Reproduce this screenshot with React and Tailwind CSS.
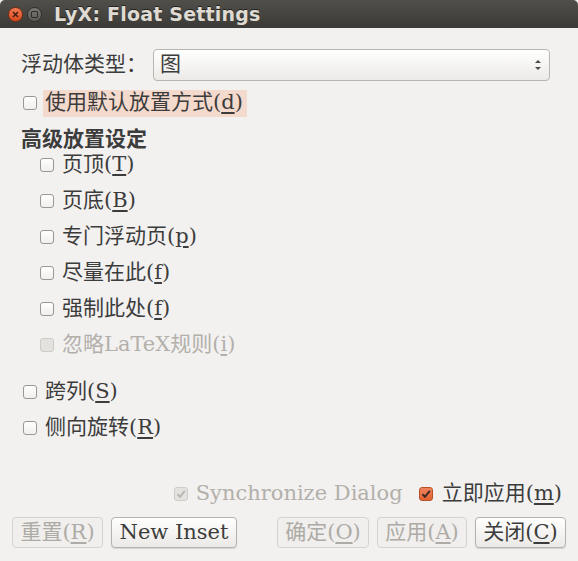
import React from "react";

const font = { fontFamily: '"DejaVu Serif", "Noto Sans CJK SC", serif' };

const Box = ({ checked, disabled, accent }) => (
  <span
    className={
      "w-[14px] h-[14px] rounded-[3px] border flex items-center justify-center shrink-0 " +
      (accent
        ? "border-[#b8502a] bg-gradient-to-b from-[#f0845c] to-[#e2612f]"
        : disabled
        ? "border-[#cfccc8] bg-[#e4e2df]"
        : "border-[#9b9893] bg-gradient-to-b from-white to-[#f0efed]")
    }
  >
    {checked && (
      <svg width="10" height="10" viewBox="0 0 10 10">
        <path
          d="M1.5 5.2 L4 7.8 L8.8 1.8"
          fill="none"
          stroke={accent ? "#3a2a24" : "#b9b6b2"}
          strokeWidth="2"
        />
      </svg>
    )}
  </span>
);

const Check = ({ label, mn, disabled, highlight, indent }) => (
  <div className={"h-[22px] flex items-center " + (indent ? "pl-[40px]" : "pl-[23px]")}>
    <Box disabled={disabled} />
    <span
      className={
        "ml-[6px] h-[27px] flex items-center px-[2px] text-[21px] " +
        (highlight ? "bg-[#f4d9cd] pr-[4px] " : "") +
        (disabled ? "text-[#b3b0ab]" : "text-[#3c3c3c]")
      }
    >
      {label}(<span className="underline underline-offset-[3px]">{mn}</span>)
    </span>
  </div>
);

const Btn = ({ children, disabled, w }) => (
  <button
    className={
      "h-[31px] rounded-[4px] border flex items-center justify-center text-[21px] " +
      w +
      (disabled
        ? " border-[#d6d3cf] bg-[#f0efed] text-[#aeaba6]"
        : " border-[#b5b2ad] bg-gradient-to-b from-white to-[#ebe9e6] text-[#3c3c3c] shadow-[0_1px_1px_rgba(0,0,0,0.12)]")
    }
  >
    {children}
  </button>
);

const Mn = ({ c }) => <span className="underline underline-offset-[3px]">{c}</span>;

export default function App() {
  return (
    <div className="w-[578px] h-[561px] bg-[#f2f1f0] flex flex-col overflow-hidden" style={font}>
      <div className="h-[28px] bg-gradient-to-b from-[#504f4a] to-[#3b3a36] flex items-center pl-[8px] rounded-t-[5px]">
        <span className="w-[15px] h-[15px] rounded-full bg-gradient-to-b from-[#f37a50] to-[#d8481c] border border-[#7a2a12] flex items-center justify-center">
          <svg width="7" height="7" viewBox="0 0 7 7">
            <path d="M1 1 L6 6 M6 1 L1 6" stroke="#3a1a10" strokeWidth="1.4" />
          </svg>
        </span>
        <span className="ml-[4px] w-[15px] h-[15px] rounded-full bg-gradient-to-b from-[#7a7975] to-[#5c5b57] border border-[#302f2c] flex items-center justify-center">
          <span className="w-[7px] h-[7px] border-[1.5px] border-[#2e2d2a] rounded-[1px]" />
        </span>
        <span
          className="ml-[12px] text-[19px] font-bold text-[#dfdbd2] tracking-[0.2px]"
          style={{ fontFamily: '"DejaVu Sans", sans-serif', textShadow: "0 -1px 0 #222" }}
        >
          LyX: Float Settings
        </span>
      </div>

      <div className="mt-[21px] flex items-center pl-[21px] pr-[28px]">
        <span className="text-[21px] text-[#3c3c3c] w-[132px]">浮动体类型：</span>
        <div className="flex-1 h-[32px] rounded-[4px] border border-[#b9b6b1] bg-gradient-to-b from-white to-[#eceae7] flex items-center pl-[6px] pr-[7px]">
          <span className="flex-1 text-[21px] text-[#3c3c3c]">图</span>
          <svg width="8" height="14" viewBox="0 0 8 14">
            <path d="M1 5 L4 2 L7 5 Z" fill="#4a4a4a" />
            <path d="M1 9 L4 12 L7 9 Z" fill="#4a4a4a" />
          </svg>
        </div>
      </div>

      <div className="mt-[11px]">
        <Check label="使用默认放置方式" mn="d" highlight />
      </div>

      <div className="mt-[7px] h-[32px] pt-[4px] flex items-center pl-[21px] text-[21px] font-bold text-[#3c3c3c]">
        高级放置设定
      </div>

      <div className="mt-[1px] flex flex-col gap-[14px]">
        <Check indent label="页顶" mn="T" />
        <Check indent label="页底" mn="B" />
        <Check indent label="专门浮动页" mn="p" />
        <Check indent label="尽量在此" mn="f" />
        <Check indent label="强制此处" mn="f" />
        <Check indent disabled label="忽略LaTeX规则" mn="i" />
      </div>

      <div className="mt-[25px] flex flex-col gap-[14px]">
        <Check label="跨列" mn="S" />
        <Check label="侧向旋转" mn="R" />
      </div>

      <div className="mt-auto h-[22px] flex items-center justify-end pr-[16px]">
        <Box checked disabled />
        <span className="ml-[8px] text-[21px] text-[#b3b0ab]">Synchronize Dialog</span>
        <span className="ml-[16px]">
          <Box checked accent />
        </span>
        <span className="ml-[9px] text-[21px] text-[#3c3c3c]">
          立即应用(<Mn c="m" />)
        </span>
      </div>

      <div className="mt-[12px] mb-[13px] flex items-center px-[12px]">
        <Btn disabled w="w-[91px]">
          重置(<Mn c="R" />)
        </Btn>
        <span className="ml-[8px]">
          <Btn w="w-[126px]">New Inset</Btn>
        </span>
        <div className="flex-1" />
        <Btn disabled w="w-[92px]">
          确定(<Mn c="O" />)
        </Btn>
        <span className="ml-[8px]">
          <Btn disabled w="w-[90px]">
            应用(<Mn c="A" />)
          </Btn>
        </span>
        <span className="ml-[8px]">
          <Btn w="w-[91px]">
            关闭(<Mn c="C" />)
          </Btn>
        </span>
      </div>
    </div>
  );
}
